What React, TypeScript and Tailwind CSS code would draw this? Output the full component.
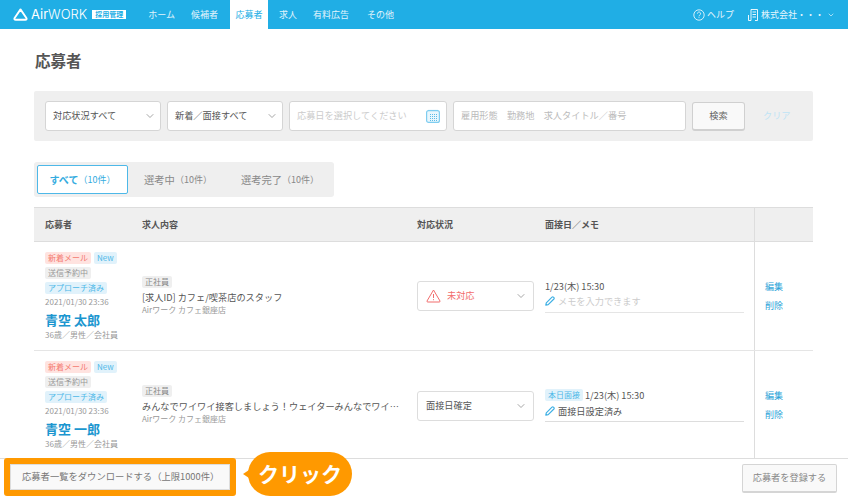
import { ChevronDown } from 'lucide-react';

const font = { fontFamily: '"Noto Sans CJK JP", "Noto Sans", sans-serif' };

function Logo() {
  return (
    <svg width="15" height="13" viewBox="0 0 16 14" fill="none" stroke="white" strokeWidth="2" strokeLinejoin="round">
      <path d="M8 1.5 L14.5 11 Q15 12.7 13.2 12.7 L2.8 12.7 Q1 12.7 1.5 11 Z" />
    </svg>
  );
}

function HelpIcon() {
  return (
    <svg width="12" height="12" viewBox="0 0 12 12" fill="none" stroke="white" strokeWidth="0.8">
      <circle cx="6" cy="6" r="5.2" />
      <path d="M4.4 4.6 A1.6 1.6 0 1 1 6.8 6 Q6 6.5 6 7.3" />
      <path d="M6 8.3 V9.1" />
    </svg>
  );
}

function BuildingIcon() {
  return (
    <svg width="10" height="12" viewBox="0 0 10 12" fill="none" stroke="white" strokeWidth="0.9">
      <path d="M3 11.5 V0.5 H9.5 V11.5 H7" />
      <path d="M0.5 11.5 H3 M0.5 11.5 V6" />
      <path d="M4.5 3 H8 M4.5 5.5 H8 M4.5 8 H8" />
    </svg>
  );
}

function CalendarIcon() {
  return (
    <svg width="14" height="14" viewBox="0 0 14 14" fill="none">
      <rect x="0.6" y="1.6" width="12.8" height="11.8" rx="2" stroke="#7fcdf0" strokeWidth="1.2" fill="#eaf7fd" />
      <path d="M3 0.8 V2 M5 0.8 V2 M7 0.8 V2 M9 0.8 V2 M11 0.8 V2" stroke="#7fcdf0" strokeWidth="0.8" />
      <path d="M4 5.5 H11 M4 7.5 H11 M4 9.5 H11 M4 11.5 H11" stroke="#5bbce8" strokeWidth="1" strokeDasharray="1 1" />
    </svg>
  );
}

function WarnIcon() {
  return (
    <svg width="15" height="14" viewBox="0 0 15 14" fill="none" stroke="#f26d6d" strokeWidth="1">
      <path d="M7.5 1 L14 12 Q14.3 13 13.2 13 L1.8 13 Q0.7 13 1 12 Z" strokeLinejoin="round" />
      <path d="M7.5 5 V9 M7.5 10.2 V11.2" />
    </svg>
  );
}

function PencilIcon() {
  return (
    <svg width="10" height="10" viewBox="0 0 10 10" fill="none" stroke="#3fb0e4" strokeWidth="1.2">
      <path d="M0.8 9.2 L1.3 6.8 L7 1.1 Q7.7 0.5 8.4 1.1 L8.9 1.6 Q9.5 2.3 8.9 3 L3.2 8.7 Z" strokeLinejoin="round" />
    </svg>
  );
}

function Chevron({ className = 'text-[#888]' }: { className?: string }) {
  return <ChevronDown size={12} strokeWidth={1.5} className={className} />;
}

function Badge({ tone, children }: { tone: 'red' | 'blue' | 'gray'; children: React.ReactNode }) {
  const tones = {
    red: 'bg-[#ffe3e0] text-[#f47a6f]',
    blue: 'bg-[#e1f2fb] text-[#4db8e8]',
    gray: 'bg-[#efefef] text-[#999]',
  };
  return (
    <span className={`flex h-3 w-fit items-center rounded-[2px] px-[3px] text-[8px] leading-none ${tones[tone]}`}>
      {children}
    </span>
  );
}

function ApplicantCell({ name }: { name: string }) {
  return (
    <div className="w-[97px] shrink-0">
      <div className="flex gap-[3px]">
        <Badge tone="red">新着メール</Badge>
        <Badge tone="blue">New</Badge>
      </div>
      <div className="mt-[3px]">
        <Badge tone="gray">送信予約中</Badge>
      </div>
      <div className="mt-[3px]">
        <Badge tone="blue">アプローチ済み</Badge>
      </div>
      <div className="mt-[2px] text-[8px] leading-[12px] text-[#999]">2021/01/30 23:36</div>
      <div className="mt-[3px] text-[13px] leading-[18px] font-bold text-[#1b96cf]">{name}</div>
      <div className="text-[8px] leading-[12px] text-[#999]">36歳／男性／会社員</div>
    </div>
  );
}

function JobCell({ title }: { title: string }) {
  return (
    <div className="w-[275px] shrink-0">
      <span className="flex h-3 w-fit items-center rounded-[2px] bg-[#efefef] px-[3px] text-[8px] leading-none text-[#888]">
        正社員
      </span>
      <div className="mt-[2px] w-[260px] truncate text-[9.2px] leading-[14px] text-[#555]">{title}</div>
      <div className="text-[8px] leading-[12px] text-[#999]">Airワーク カフェ銀座店</div>
    </div>
  );
}

function ActionCell() {
  return (
    <div className="flex w-[59px] shrink-0 flex-col justify-center gap-[7px] self-stretch border-l border-[#ddd] pl-[10px] pt-[1px] text-[9px] leading-[12px] text-[#2ba3d8]">
      <span>編集</span>
      <span>削除</span>
    </div>
  );
}

export default function App() {
  return (
    <div style={font} className="relative flex h-[499px] w-[848px] flex-col overflow-hidden bg-white">
      {/* Header */}
      <header className="flex h-[29px] shrink-0 items-center bg-[#20aee5] pl-[13px] pr-[13px] text-[9px] text-white">
        <Logo />
        <span className="ml-[3px] text-[13px] leading-none" style={{ fontFamily: '"Inter", sans-serif' }}>
          Air<span className="font-light">WORK</span>
        </span>
        <span className="ml-[5px] flex h-[9px] w-[34px] items-center justify-center bg-white text-[7px] leading-none font-bold text-[#20aee5]">
          採用管理
        </span>
        <nav className="ml-[22px] flex h-full items-center text-[#e0f4fc]">
          <span>ホーム</span>
          <span className="ml-[16px]">候補者</span>
          <span className="ml-[12px] flex h-full w-[38px] items-center justify-center bg-white text-[#20aee5]">応募者</span>
          <span className="ml-[11px]">求人</span>
          <span className="ml-[16px]">有料広告</span>
          <span className="ml-[18px]">その他</span>
        </nav>
        <div className="ml-auto flex items-center text-[#e6f6fd]">
          <HelpIcon />
          <span className="ml-[2px]">ヘルプ</span>
          <span className="ml-[14px]"><BuildingIcon /></span>
          <span className="ml-[3px]">株式会社・・・</span>
          <ChevronDown size={8} className="ml-[3px]" />
        </div>
      </header>

      <main className="min-h-0 flex-1 overflow-hidden pl-[34px] pr-[35px]">
        <h1 className="mt-[20px] pl-px text-[15.5px] leading-[22px] font-bold text-[#555]">応募者</h1>

        {/* Filters */}
        <div className="mt-[20px] flex h-[50px] items-center gap-[6px] rounded-[2px] bg-[#efefef] px-[11px] text-[9.2px]">
          <div className="flex h-[30px] w-[116px] items-center justify-between rounded-[3px] border border-[#d5d5d5] bg-white pl-[7px] pr-[4px] text-[#555]">
            対応状況すべて
            <Chevron />
          </div>
          <div className="flex h-[30px] w-[116px] items-center justify-between rounded-[3px] border border-[#d5d5d5] bg-white pl-[7px] pr-[4px] text-[#555]">
            新着／面接すべて
            <Chevron />
          </div>
          <div className="flex h-[30px] w-[158px] items-center justify-between rounded-[3px] border border-[#d5d5d5] bg-white pl-[7px] pr-[6px] text-[#ccc]">
            応募日を選択してください
            <CalendarIcon />
          </div>
          <div className="flex h-[30px] w-[233px] items-center rounded-[3px] border border-[#d5d5d5] bg-white pl-[7px] text-[#bbb]">
            雇用形態　勤務地　求人タイトル／番号
          </div>
          <div className="flex h-[29px] w-[53px] items-center justify-center rounded-[3px] border border-b-2 border-[#d0d0d0] bg-[#f9f9f9] text-[#666]">
            検索
          </div>
          <span className="ml-[12px] text-[#bfe4f5]">クリア</span>
        </div>

        {/* Tabs */}
        <div className="mt-[21px] flex h-[35px] w-[300px] items-center rounded-[3px] bg-[#efefef] pl-[3px] text-[#888]">
          <div className="flex h-[29px] w-[91px] items-center justify-center rounded-[2px] border border-[#4db8e8] bg-white text-[#35ace0]">
            <span className="text-[10px] font-bold">すべて</span>
            <span className="text-[9px]">（10件）</span>
          </div>
          <div className="ml-[16px] flex items-center">
            <span className="text-[10.3px]">選考中</span>
            <span className="text-[9px]">（10件）</span>
          </div>
          <div className="ml-[29px] flex items-center">
            <span className="text-[10.3px]">選考完了</span>
            <span className="text-[9px]">（10件）</span>
          </div>
        </div>

        {/* Table */}
        <div className="mt-[10px] flex h-[35px] items-stretch border-y border-[#ddd] bg-[#efefef] pl-[11px] text-[9px] font-bold text-[#555]">
          <div className="flex w-[97px] items-center">応募者</div>
          <div className="flex w-[275px] items-center">求人内容</div>
          <div className="flex w-[128px] items-center">対応状況</div>
          <div className="flex w-[209px] items-center">面接日／メモ</div>
          <div className="w-[59px] border-l border-[#ddd]" />
        </div>

        <div className="flex h-[109px] items-center border-b border-[#e5e5e5] pl-[11px]">
          <ApplicantCell name="青空 太郎" />
          <JobCell title="[求人ID] カフェ/喫茶店のスタッフ" />
          <div className="w-[128px] shrink-0">
            <div className="flex h-[30px] w-[117px] items-center rounded-[3px] border border-[#ddd] pl-[8px] pr-[6px] text-[9.2px] text-[#f26d6d]">
              <WarnIcon />
              <span className="ml-[6px]">未対応</span>
              <Chevron className="ml-auto text-[#888]" />
            </div>
          </div>
          <div className="w-[209px] shrink-0 pr-[10px]">
            <div className="text-[9.2px] leading-[14px] text-[#555]">1/23(木) 15:30</div>
            <div className="mt-[1px] flex items-center gap-[3px] border-b border-[#e5e5e5] pb-[4px] text-[9.2px] leading-[14px] text-[#ccc]">
              <PencilIcon />
              メモを入力できます
            </div>
          </div>
          <ActionCell />
        </div>

        <div className="flex h-[108px] items-center pl-[11px]">
          <ApplicantCell name="青空 一郎" />
          <JobCell title="みんなでワイワイ接客しましょう！ウェイターみんなでワイワイ接客しましょう" />
          <div className="w-[128px] shrink-0 pt-px">
            <div className="flex h-[30px] w-[117px] items-center rounded-[3px] border border-[#ddd] pl-[8px] pr-[6px] text-[9.2px] text-[#555]">
              面接日確定
              <Chevron className="ml-auto text-[#888]" />
            </div>
          </div>
          <div className="w-[209px] shrink-0 pr-[10px]">
            <div className="flex items-center gap-[2px] text-[9.2px] leading-[14px] text-[#555]">
              <Badge tone="blue">本日面接</Badge>
              1/23(木) 15:30
            </div>
            <div className="mt-[2px] flex items-center gap-[3px] border-b border-[#ddd] pb-[3px] text-[9.2px] leading-[14px] text-[#555]">
              <PencilIcon />
              面接日設定済み
            </div>
          </div>
          <ActionCell />
        </div>
      </main>

      {/* Footer */}
      <footer className="flex h-[41px] shrink-0 items-start justify-between border-t border-[#ddd] pt-[5px] pl-[10px] pr-[11px] text-[9.2px]">
        <div className="flex h-[26px] w-[220px] items-center border border-[#ddd] bg-[#f9f9f9] pl-[11px] text-[9.3px] text-[#777]">
          応募者一覧をダウンロードする（上限1000件）
        </div>
        <div className="flex h-[29px] w-[95px] items-center justify-center rounded-[2px] border border-b-2 border-[#d5d5d5] bg-[#f9f9f9] text-[#888]">
          応募者を登録する
        </div>
      </footer>

      {/* Annotation */}
      <div className="pointer-events-none absolute left-[4px] top-[458px] h-[38px] w-[232px] rounded-[3px] border-[6px] border-[#ff9900]" />
      <div className="absolute left-[248px] top-[452px] flex h-[44px] w-[104px] items-center justify-center rounded-full bg-[#ff9900] text-[21px] font-bold text-white">
        <span className="absolute left-[-5px] top-[18px] h-0 w-0 border-y-[4px] border-r-[6px] border-y-transparent border-r-[#ff9900]" />
        クリック
      </div>
    </div>
  );
}
